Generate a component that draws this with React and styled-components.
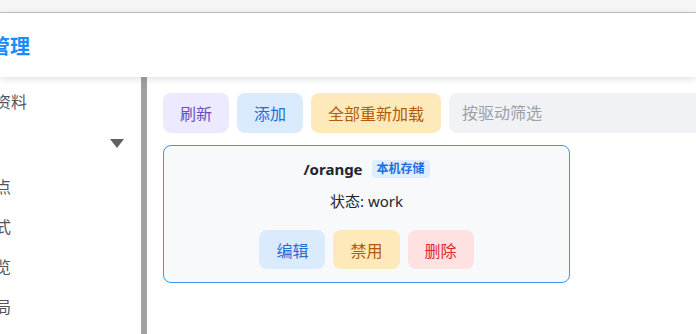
import styled, { createGlobalStyle } from "styled-components";

const GlobalStyle = createGlobalStyle`
  html, body {
    margin: 0;
    padding: 0;
    background: #ffffff;
    font-family: "Noto Sans", "Noto Sans CJK SC", sans-serif;
    overflow: hidden;
  }
  * {
    box-sizing: border-box;
  }
`;

const Page = styled.div`
  display: flex;
  flex-direction: column;
  width: 696px;
  height: 334px;
  overflow: hidden;
`;

const TopStrip = styled.div`
  height: 13px;
  background: #f5f5f5;
  border-bottom: 1px solid #c2c2c2;
  flex-shrink: 0;
`;

const Header = styled.header`
  position: relative;
  z-index: 2;
  height: 64px;
  flex-shrink: 0;
  display: flex;
  align-items: center;
  background: #ffffff;
  box-shadow: 0 2px 8px rgba(0, 0, 0, 0.12);
`;

const Title = styled.h1`
  margin: 0 0 0 -50px;
  font-size: 20px;
  font-weight: 700;
  color: #1a8cff;
  white-space: nowrap;
`;

const Body = styled.div`
  display: flex;
  flex: 1;
  min-height: 0;
`;

const Sidebar = styled.nav`
  width: 141px;
  flex-shrink: 0;
  overflow: hidden;
  padding-top: 4px;
`;

const NavList = styled.ul`
  list-style: none;
  margin: 0 0 0 -37px;
  padding: 0;
`;

const NavItem = styled.li`
  display: flex;
  align-items: center;
  justify-content: space-between;
  height: 40px;
  margin-bottom: ${(p) => (p.$group ? "5px" : "0")};
  padding-left: ${(p) => (p.$sub ? "16px" : "0")};
  padding-right: 17px;
  font-size: 16px;
  color: #50555e;
  white-space: nowrap;
`;

const Caret = styled.span`
  width: 0;
  height: 0;
  border-left: 7px solid transparent;
  border-right: 7px solid transparent;
  border-top: 9px solid #5f6368;
  margin-top: 4px;
`;

const ScrollBar = styled.div`
  width: 6px;
  flex-shrink: 0;
  background: #a0a0a0;
`;

const Main = styled.main`
  flex: 1;
  min-width: 0;
  padding: 16px 0 0 16px;
  display: flex;
  flex-direction: column;
  gap: 12px;
`;

const Toolbar = styled.div`
  display: flex;
  gap: 8px;
`;

const palette = {
  purple: { bg: "#ede9fe", fg: "#6550c4" },
  blue: { bg: "#dbebfe", fg: "#1f6fd6" },
  amber: { bg: "#fde9b9", fg: "#b35a0b" },
  red: { bg: "#fee2e2", fg: "#db2633" },
};

const Button = styled.button`
  height: ${(p) => (p.$small ? "39px" : "40px")};
  padding: 0 17px;
  border: none;
  border-radius: 8px;
  font-family: inherit;
  font-size: 16px;
  white-space: nowrap;
  background: ${(p) => palette[p.$tone].bg};
  color: ${(p) => palette[p.$tone].fg};
  cursor: pointer;
  flex-shrink: 0;
`;

const Filter = styled.input`
  flex: 1;
  min-width: 300px;
  height: 40px;
  border: none;
  border-radius: 8px;
  background: #f0f2f5;
  padding: 0 13px;
  font-family: inherit;
  font-size: 16px;
  color: #333;
  &::placeholder {
    color: #9aa0a8;
  }
`;

const Card = styled.div`
  width: 407px;
  border: 1px solid #3897f2;
  border-radius: 8px;
  background: #f7f9fb;
  padding: 11px 0 13px;
  display: flex;
  flex-direction: column;
  align-items: center;
`;

const CardTitle = styled.div`
  display: flex;
  align-items: center;
  gap: 9px;
  height: 24px;
`;

const Path = styled.span`
  font-size: 15px;
  font-weight: 700;
  color: #1f2530;
`;

const Tag = styled.span`
  font-size: 12px;
  font-weight: 700;
  color: #1c6fe0;
  background: #dfedfe;
  border-radius: 4px;
  padding: 0 5px;
  line-height: 18px;
`;

const Status = styled.div`
  margin-top: 8px;
  font-size: 15px;
  line-height: 24px;
  color: #1f2530;
`;

const Actions = styled.div`
  display: flex;
  gap: 8px;
  margin-top: 17px;
`;

export default function App() {
  return (
    <Page>
      <GlobalStyle />
      <TopStrip />
      <Header>
        <Title>存储管理</Title>
      </Header>
      <Body>
        <Sidebar>
          <NavList>
            <NavItem>个人资料</NavItem>
            <NavItem $group>
              设置
              <Caret />
            </NavItem>
            <NavItem $sub>节点</NavItem>
            <NavItem $sub>样式</NavItem>
            <NavItem $sub>预览</NavItem>
            <NavItem $sub>布局</NavItem>
          </NavList>
        </Sidebar>
        <ScrollBar />
        <Main>
          <Toolbar>
            <Button $tone="purple">刷新</Button>
            <Button $tone="blue">添加</Button>
            <Button $tone="amber">全部重新加载</Button>
            <Filter placeholder="按驱动筛选" />
          </Toolbar>
          <Card>
            <CardTitle>
              <Path>/orange</Path>
              <Tag>本机存储</Tag>
            </CardTitle>
            <Status>状态: work</Status>
            <Actions>
              <Button $tone="blue" $small>编辑</Button>
              <Button $tone="amber" $small>禁用</Button>
              <Button $tone="red" $small>删除</Button>
            </Actions>
          </Card>
        </Main>
      </Body>
    </Page>
  );
}
